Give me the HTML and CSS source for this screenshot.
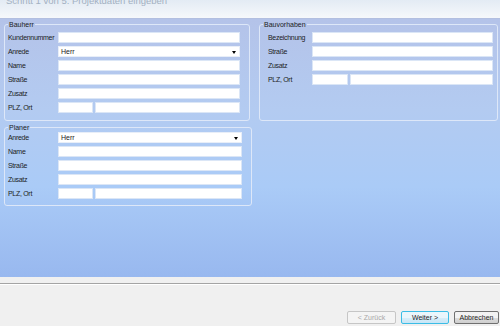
FILE: index.html
```html
<!DOCTYPE html>
<html>
<head>
	<meta charset="utf-8">
	<title>Projektdaten eingeben</title>
	<link rel="stylesheet" href="styles.css">
</head>
<body>
	<div class="header">
		<div class="title">Schritt 1 von 5: Projektdaten eingeben</div>
	</div>

	<div class="panel">
		<div class="col_left">
			<fieldset class="group group_bauherr">
				<legend>Bauherr</legend>
				<div class="row"><label>Kundennummer</label><div class="field"></div></div>
				<div class="row"><label>Anrede</label><div class="field combo">Herr<span class="arrow"></span></div></div>
				<div class="row"><label>Name</label><div class="field"></div></div>
				<div class="row"><label>Straße</label><div class="field"></div></div>
				<div class="row"><label>Zusatz</label><div class="field"></div></div>
				<div class="row"><label>PLZ, Ort</label><div class="split"><div class="field plz"></div><div class="field"></div></div></div>
			</fieldset>

			<fieldset class="group group_planer">
				<legend>Planer</legend>
				<div class="row"><label>Anrede</label><div class="field combo">Herr<span class="arrow"></span></div></div>
				<div class="row"><label>Name</label><div class="field"></div></div>
				<div class="row"><label>Straße</label><div class="field"></div></div>
				<div class="row"><label>Zusatz</label><div class="field"></div></div>
				<div class="row"><label>PLZ, Ort</label><div class="split"><div class="field plz"></div><div class="field"></div></div></div>
			</fieldset>
		</div>

		<fieldset class="group group_bauvorhaben">
			<legend>Bauvorhaben</legend>
			<div class="row"><label>Bezeichnung</label><div class="field"></div></div>
			<div class="row"><label>Straße</label><div class="field"></div></div>
			<div class="row"><label>Zusatz</label><div class="field"></div></div>
			<div class="row"><label>PLZ, Ort</label><div class="split"><div class="field plz"></div><div class="field"></div></div></div>
		</fieldset>
	</div>

	<div class="footer">
		<div class="separator"></div>
		<div class="buttons">
			<button class="btn btn_disabled">&lt; Zurück</button>
			<button class="btn btn_default">Weiter &gt;</button>
			<button class="btn btn_cancel">Abbrechen</button>
		</div>
	</div>
</body>
</html>
```

FILE: styles.css
```css
html, body
{
	margin: 0;
	padding: 0;
}

body
{
	width: 500px;
	height: 326px;
	overflow: hidden;
	background-color: #f0f0f0;
	font-family: "Liberation Sans", Arial, sans-serif;
	font-size: 7px;
	color: #1c1c1c;
}

.header
{
	height: 18px;
	overflow: hidden;
	background: linear-gradient(#e3ebf4, #f6f8fb);
	border-bottom: 1px solid #b3bfe0;
}

.title
{
	margin-top: -5px;
	padding-left: 6px;
	font-size: 9.5px;
	line-height: 12px;
	color: #a3b1c2;
}

.panel
{
	height: 258px;
	box-sizing: border-box;
	padding: 2px 2px 0 4px;
	display: flex;
	gap: 7px;
	background: linear-gradient(#b4c3e9 0%, #b3cbf1 35%, #aacbf7 65%, #98b8ef 100%);
}

.col_left
{
	display: flex;
	flex-direction: column;
	gap: 3px;
}

.group
{
	margin: 0;
	border: 1px solid #dde7f8;
	border-radius: 3px;
	padding: 4px 9px 7px 3px;
	display: flex;
	flex-direction: column;
	gap: 3px;
}

.group legend
{
	padding: 0 1px;
	line-height: 7px;
	font-size: 7px;
}

.group_bauherr
{
	width: 246px;
	height: 100px;
	box-sizing: border-box;
}

.group_planer
{
	width: 248px;
	height: 82px;
	box-sizing: border-box;
	padding-top: 1px;
}

.group_bauvorhaben
{
	width: 239px;
	height: 100px;
	box-sizing: border-box;
	padding-right: 4px;
}

.row
{
	display: flex;
	align-items: center;
	height: 11px;
}

.row label
{
	width: 50px;
	flex: none;
	white-space: nowrap;
	letter-spacing: -0.3px;
}

.group_bauvorhaben .row label
{
	width: 44px;
	padding-left: 5px;
}

.field
{
	flex: 1;
	height: 11px;
	box-sizing: border-box;
	background-color: white;
	border: 1px solid #dbe6f6;
}

.combo
{
	position: relative;
	padding-left: 2px;
	line-height: 9px;
	border-color: #e8eef8;
}

.arrow
{
	position: absolute;
	right: 3px;
	top: 4px;
	border-left: 2px solid transparent;
	border-right: 2px solid transparent;
	border-top: 3px solid black;
}

.split
{
	flex: 1;
	display: flex;
	gap: 2px;
}

.plz
{
	flex: none;
	width: 35px;
}

.group_bauvorhaben .plz
{
	width: 36px;
}

.footer
{
	height: 49px;
	padding-top: 6px;
	box-sizing: border-box;
}

.separator
{
	height: 1px;
	background-color: #a4a4a4;
	border-bottom: 1px solid white;
}

.buttons
{
	display: flex;
	justify-content: flex-end;
	gap: 5px;
	margin-top: 26px;
	padding-right: 1px;
}

.btn
{
	width: 49px;
	height: 13px;
	padding: 0;
	font-family: "Liberation Sans", Arial, sans-serif;
	font-size: 7px;
	color: #1c1c1c;
	border: 1px solid #707070;
	border-radius: 2px;
	background: linear-gradient(#f2f2f2 50%, #dddddd 50%, #cfcfcf);
}

.btn_disabled
{
	color: #a8a8a8;
	border-color: #c6c6c6;
	background: #f4f4f4;
}

.btn_default
{
	width: 48px;
	border-color: #3cbde6;
	background: linear-gradient(#eaf6fc 50%, #d8eef9 50%, #c8e6f6);
}

.btn_cancel
{
	width: 45px;
}
```
